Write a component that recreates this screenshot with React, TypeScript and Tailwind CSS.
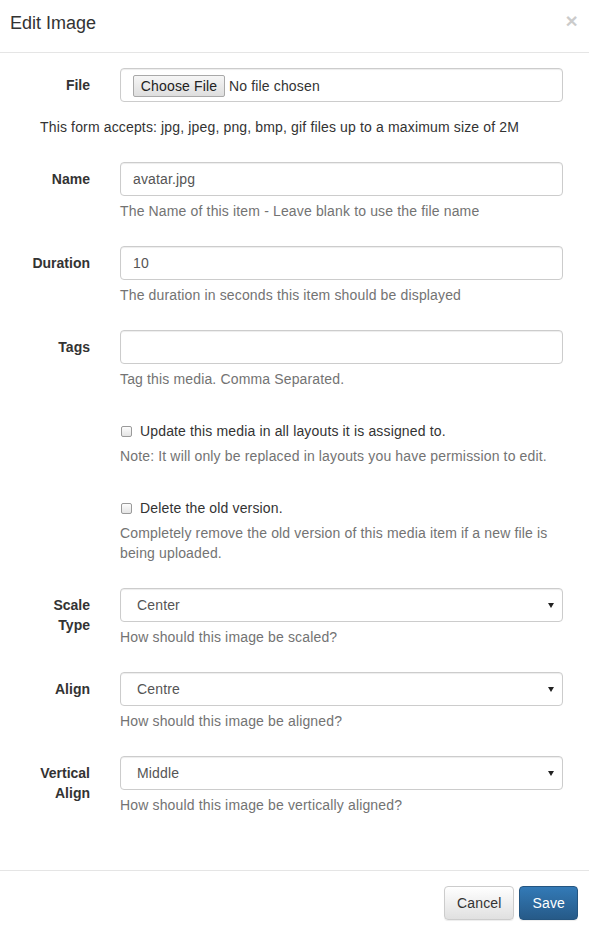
import type { ReactNode } from "react"

const FormRow = ({ label, children }: { label: string; children: ReactNode }) => (
  <div className="flex mb-[15px]">
    <label className="w-[105px] shrink-0 pl-[29px] pr-[15px] pt-[7px] text-right font-bold tracking-normal">{label}</label>
    <div className="w-[473px] px-[15px]">{children}</div>
  </div>
)

const Help = ({ children }: { children: ReactNode }) => (
  <p className="mt-[5px] mb-[10px] text-[#737373]">{children}</p>
)

const TextInput = ({ value }: { value: string }) => (
  <div className="h-[34px] border border-[#ccc] rounded-[4px] px-[12px] py-[6px] text-[#555] shadow-[inset_0_1px_1px_rgba(0,0,0,0.075)]">
    {value}
  </div>
)

const Select = ({ value }: { value: string }) => (
  <div className="h-[34px] border border-[#ccc] rounded-[4px] pl-[16px] pr-[8px] flex items-center justify-between text-[#555] shadow-[inset_0_1px_1px_rgba(0,0,0,0.075)]">
    <span>{value}</span>
    <span className="w-0 h-0 border-l-[3px] border-r-[3px] border-t-[5px] border-l-transparent border-r-transparent border-t-[#222]" />
  </div>
)

const Checkbox = ({ text }: { text: string }) => (
  <div className="pt-[7px] flex items-center h-[27px]">
    <span className="ml-[1px] mr-[8px] w-[11px] h-[11px] rounded-[2px] border border-[#9a9a9a] bg-linear-to-b from-[#fdfdfd] to-[#e4e4e4]" />
    <span>{text}</span>
  </div>
)

const App = () => {
  const selects = [
    { label: "Scale Type", value: "Center", help: "How should this image be scaled?" },
    { label: "Align", value: "Centre", help: "How should this image be aligned?" },
    { label: "Vertical Align", value: "Middle", help: "How should this image be vertically aligned?" },
  ]

  return (
    <div className="w-full bg-white font-['Liberation_Sans',Arial,sans-serif] text-[14px] leading-[20px] tracking-[0.15px] text-[#333]">
      {/* header */}
      <div className="h-[53px] border-b border-[#e5e5e5] flex items-start justify-between pl-[10px] pr-[11px] pt-[10px]">
        <h4 className="text-[18px] leading-[26px] tracking-normal">Edit Image</h4>
        <span className="text-[21px] leading-none font-bold text-black opacity-20">×</span>
      </div>

      {/* body */}
      <div className="pt-[15px] pb-[30px]">
        <FormRow label="File">
          <div className="h-[34px] border border-[#ccc] rounded-[4px] pl-[12px] flex items-center shadow-[inset_0_1px_1px_rgba(0,0,0,0.075)]">
            <span className="w-[92px] h-[22px] flex items-center justify-center border border-[#a9a9a9] rounded-[2px] bg-linear-to-b from-[#f6f6f6] to-[#dedede] text-[#222] mt-[2px]">
              Choose File
            </span>
            <span className="ml-[4px] text-[#333] mt-[2px]">No file chosen</span>
          </div>
        </FormRow>

        <p className="pl-[40px] mb-[25px]">This form accepts: jpg, jpeg, png, bmp, gif files up to a maximum size of 2M</p>

        <FormRow label="Name">
          <TextInput value="avatar.jpg" />
          <Help>The Name of this item - Leave blank to use the file name</Help>
        </FormRow>

        <FormRow label="Duration">
          <TextInput value="10" />
          <Help>The duration in seconds this item should be displayed</Help>
        </FormRow>

        <FormRow label="Tags">
          <TextInput value="" />
          <Help>Tag this media. Comma Separated.</Help>
        </FormRow>

        <FormRow label="">
          <Checkbox text="Update this media in all layouts it is assigned to." />
          <Help>Note: It will only be replaced in layouts you have permission to edit.</Help>
        </FormRow>

        <FormRow label="">
          <Checkbox text="Delete the old version." />
          <Help>Completely remove the old version of this media item if a new file is being uploaded.</Help>
        </FormRow>

        {selects.map((s, i) => (
          <FormRow label={s.label} key={i}>
            <Select value={s.value} />
            <Help>{s.help}</Help>
          </FormRow>
        ))}
      </div>

      {/* footer */}
      <div className="border-t border-[#e5e5e5] pt-[15px] pb-[15px] pr-[11px] flex justify-end gap-[5px]">
        <button className="h-[34px] px-[12px] border border-[#ccc] rounded-[4px] bg-linear-to-b from-white to-[#e0e0e0] text-[#333] shadow-[0_1px_1px_rgba(0,0,0,0.075)]">
          Cancel
        </button>
        <button className="h-[34px] px-[12px] border border-[#245580] rounded-[4px] bg-linear-to-b from-[#337ab7] to-[#265a88] text-white shadow-[0_1px_1px_rgba(0,0,0,0.075)]">
          Save
        </button>
      </div>
    </div>
  )
}

export default App
